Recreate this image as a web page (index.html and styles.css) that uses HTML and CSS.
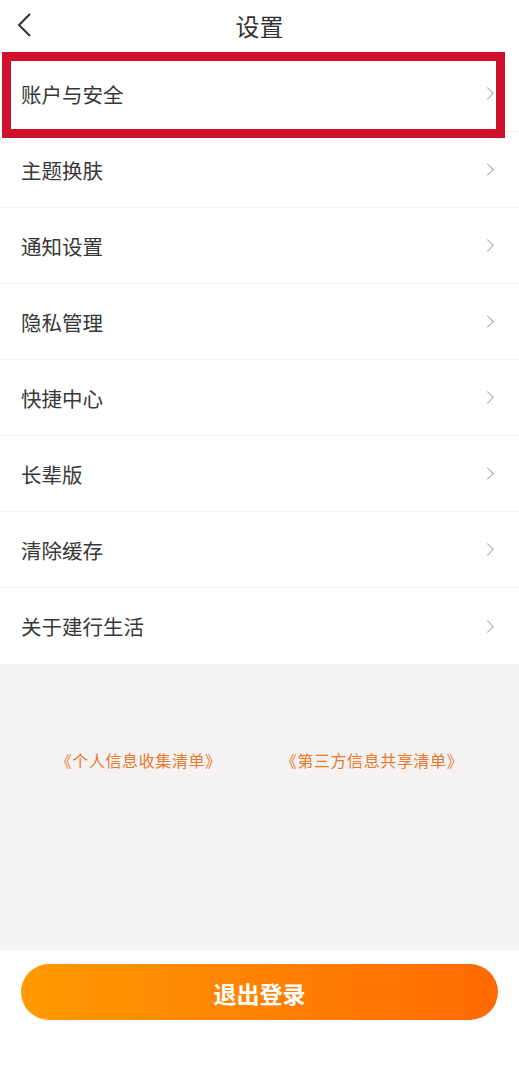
FILE: index.html
```html
<!DOCTYPE html>
<html lang="zh-CN">
<head>
  <meta charset="UTF-8">
  <meta name="viewport" content="width=device-width, initial-scale=1.0">
  <title>设置</title>
  <link rel="stylesheet" href="styles.css">
</head>
<body>
  <header class="topbar">
    <span class="back">
      <svg width="16" height="24" viewBox="0 0 16 24"><path d="M14 1 L3 12 L14 23" fill="none" stroke="#333" stroke-width="2"/></svg>
    </span>
    <h1 class="title">设置</h1>
  </header>

  <ul class="menu">
    <li class="menu-item">账户与安全<span class="arrow"></span></li>
    <li class="menu-item">主题换肤<span class="arrow"></span></li>
    <li class="menu-item">通知设置<span class="arrow"></span></li>
    <li class="menu-item">隐私管理<span class="arrow"></span></li>
    <li class="menu-item">快捷中心<span class="arrow"></span></li>
    <li class="menu-item">长辈版<span class="arrow"></span></li>
    <li class="menu-item">清除缓存<span class="arrow"></span></li>
    <li class="menu-item">关于建行生活<span class="arrow"></span></li>
  </ul>
  <div class="highlight"></div>

  <div class="links">
    <a class="link">《个人信息收集清单》</a>
    <a class="link">《第三方信息共享清单》</a>
  </div>

  <footer class="bottom">
    <button class="logout">退出登录</button>
  </footer>
</body>
</html>
```

FILE: styles.css
```css
body {
  margin: 0;
  padding: 0;
  font-family: "Noto Sans CJK SC", "Noto Sans", sans-serif;
  background-color: #fff;
  color: #333;
  position: relative;
}

.topbar {
  height: 56px;
  display: flex;
  align-items: center;
  justify-content: center;
  position: relative;
}

.back {
  position: absolute;
  left: 16px;
  top: 13px;
}

.title {
  margin: 0;
  font-size: 24px;
  font-weight: normal;
  color: #333;
  margin-top: -5px;
}

.menu {
  list-style: none;
  margin: 0;
  padding: 0;
}

.menu-item {
  height: 75px;
  border-bottom: 1px solid #eeeeee;
  display: flex;
  align-items: center;
  justify-content: space-between;
  padding: 0 23px 0 21px;
  font-size: 20.5px;
  color: #383838;
}

.menu-item:last-child {
  border-bottom: none;
  height: 76px;
}

.arrow {
  width: 8px;
  height: 8px;
  border-top: 1.5px solid #a6a6a6;
  border-right: 1.5px solid #a6a6a6;
  transform: rotate(45deg);
  margin-right: 4px;
}

.highlight {
  position: absolute;
  left: 2px;
  top: 52px;
  width: 485px;
  height: 68px;
  border: 9px solid #d0112b;
}

.links {
  background-color: #f4f2f2;
  height: 286px;
  box-sizing: border-box;
  padding-top: 84px;
  display: flex;
  align-items: flex-start;
  justify-content: center;
  gap: 59px;
}

.link {
  font-size: 16px;
  letter-spacing: 0.6px;
  color: #e8792c;
}

.bottom {
  height: 125px;
  padding: 14px 21px 0;
  box-sizing: border-box;
}

.logout {
  width: 477px;
  height: 56px;
  border: none;
  border-radius: 28px;
  background: linear-gradient(90deg, #ff9a02, #ff6a02);
  color: #fff;
  font-family: "Noto Sans CJK SC", sans-serif;
  font-size: 23px;
  font-weight: bold;
  padding-top: 3px;
}
```
